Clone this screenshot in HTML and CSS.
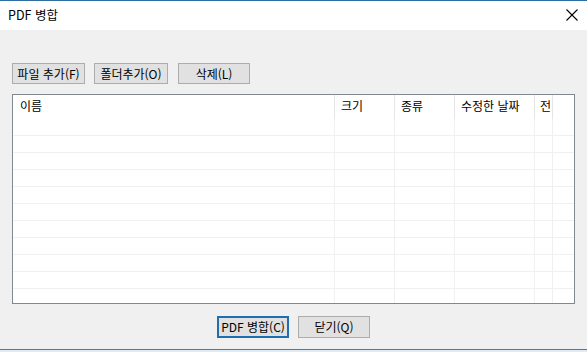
FILE: index.html
```html
<!DOCTYPE html>
<html lang="ko">
<head>
<meta charset="utf-8">
<title>PDF 병합</title>
<link rel="stylesheet" href="styles.css">
</head>
<body>
<div class="window">
  <div class="titlebar">
    <span class="title">PDF 병합</span>
    <svg class="close" width="12" height="12" viewBox="0 0 12 12"><path d="M0.5 0.5 L11.5 11.5 M11.5 0.5 L0.5 11.5" stroke="#000" stroke-width="1.1" fill="none"/></svg>
  </div>
  <div class="content">
    <div class="toolbar">
      <button class="btn b1">파일 추가(F)</button>
      <button class="btn b2">폴더추가(O)</button>
      <button class="btn b3">삭제(L)</button>
    </div>
    <div class="list">
      <div class="row head">
        <div class="cell c1">이름</div>
        <div class="cell c2">크기</div>
        <div class="cell c3">종류</div>
        <div class="cell c4">수정한 날짜</div>
        <div class="cell c5">전</div>
        <div class="cell c6"></div>
      </div>
      <div class="row"><div class="cell c1"></div><div class="cell c2"></div><div class="cell c3"></div><div class="cell c4"></div><div class="cell c5"></div><div class="cell c6"></div></div>
      <div class="row"><div class="cell c1"></div><div class="cell c2"></div><div class="cell c3"></div><div class="cell c4"></div><div class="cell c5"></div><div class="cell c6"></div></div>
      <div class="row"><div class="cell c1"></div><div class="cell c2"></div><div class="cell c3"></div><div class="cell c4"></div><div class="cell c5"></div><div class="cell c6"></div></div>
      <div class="row"><div class="cell c1"></div><div class="cell c2"></div><div class="cell c3"></div><div class="cell c4"></div><div class="cell c5"></div><div class="cell c6"></div></div>
      <div class="row"><div class="cell c1"></div><div class="cell c2"></div><div class="cell c3"></div><div class="cell c4"></div><div class="cell c5"></div><div class="cell c6"></div></div>
      <div class="row"><div class="cell c1"></div><div class="cell c2"></div><div class="cell c3"></div><div class="cell c4"></div><div class="cell c5"></div><div class="cell c6"></div></div>
      <div class="row"><div class="cell c1"></div><div class="cell c2"></div><div class="cell c3"></div><div class="cell c4"></div><div class="cell c5"></div><div class="cell c6"></div></div>
      <div class="row"><div class="cell c1"></div><div class="cell c2"></div><div class="cell c3"></div><div class="cell c4"></div><div class="cell c5"></div><div class="cell c6"></div></div>
      <div class="row"><div class="cell c1"></div><div class="cell c2"></div><div class="cell c3"></div><div class="cell c4"></div><div class="cell c5"></div><div class="cell c6"></div></div>
      <div class="row"><div class="cell c1"></div><div class="cell c2"></div><div class="cell c3"></div><div class="cell c4"></div><div class="cell c5"></div><div class="cell c6"></div></div>
      <div class="row"><div class="cell c1"></div><div class="cell c2"></div><div class="cell c3"></div><div class="cell c4"></div><div class="cell c5"></div><div class="cell c6"></div></div>
    </div>
    <div class="footer">
      <button class="btn default">PDF 병합(C)</button>
      <button class="btn">닫기(Q)</button>
    </div>
  </div>
  <div class="bottomedge"></div>
</div>
</body>
</html>
```

FILE: styles.css
```css
html, body {
  margin: 0;
  padding: 0;
}
body {
  width: 587px;
  height: 352px;
  overflow: hidden;
  background: #f0f0f0;
  font-family: "Noto Sans CJK KR", "Noto Sans", sans-serif;
  font-size: 12px;
  color: #000;
}
.window {
  width: 587px;
  height: 352px;
  display: flex;
  flex-direction: column;
  border-top: 1px solid #2e6fa3;
  box-sizing: border-box;
}
.titlebar {
  height: 29px;
  background: #fff;
  display: flex;
  align-items: center;
  justify-content: space-between;
  padding: 0 9px 0 8px;
  flex: none;
}
.title {
  font-size: 12.5px;
  line-height: 14px;
  margin-top: -1px;
}
.close {
  display: block;
  margin-top: -2px;
}
.content {
  flex: 1;
  display: flex;
  flex-direction: column;
  padding: 33px 12px 0 12px;
}
.toolbar {
  display: flex;
  height: 21px;
}
.btn {
  font-family: inherit;
  font-size: 12px;
  line-height: 14px;
  color: #000;
  background: #e1e1e1;
  border: 1px solid #adadad;
  border-radius: 0;
  padding: 0;
  margin: 0;
  box-sizing: border-box;
  height: 21px;
  width: 73px;
}
.b2 {
  margin-left: 9px;
  width: 74px;
}
.b3 {
  margin-left: 10px;
  width: 72px;
}
.list {
  margin-top: 10px;
  height: 210px;
  width: 563px;
  box-sizing: border-box;
  border: 1px solid #828790;
  background: #fff;
  overflow: hidden;
}
.row {
  display: flex;
  height: 17px;
  box-sizing: border-box;
  border-bottom: 1px solid #f0f0f0;
}
.row.head {
  height: 24px;
  border-bottom: none;
}
.cell {
  box-sizing: border-box;
  height: 100%;
  overflow: hidden;
  white-space: nowrap;
  border-left: 1px solid #f0f0f0;
}
.head .cell {
  border-left-color: #e5e5e5;
  padding: 4px 0 0 6px;
  line-height: 14px;
}
.c1 { width: 321px; border-left: none; }
.head .c1 { padding-left: 7px; }
.c2 { width: 60px; }
.c3 { width: 60px; }
.c4 { width: 80px; }
.c5 { width: 18px; }
.head .c5 { padding-left: 5px; }
.c6 { flex: 1; }
.footer {
  display: flex;
  justify-content: center;
  gap: 9px;
  margin-top: 12px;
}
.footer .btn {
  height: 22px;
  width: 72px;
}
.btn.default {
  border: 2px solid #1f6fb0;
}
.bottomedge {
  height: 3px;
  border-top: 1px solid #3b80b8;
  background: #dcebf7;
  box-sizing: border-box;
  flex: none;
}
```
